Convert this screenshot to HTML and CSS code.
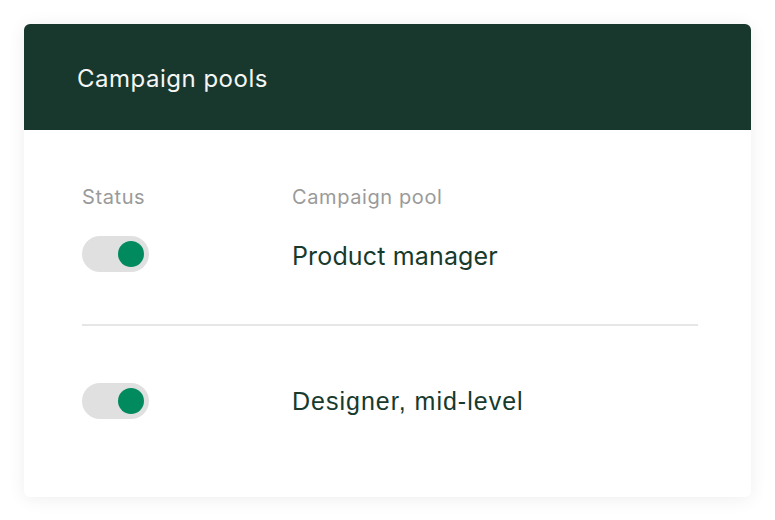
FILE: index.html
```html
<!DOCTYPE html>
<html lang="en">
<head>
    <meta charset="UTF-8">
    <meta name="viewport" content="width=device-width, initial-scale=1.0">
    <title>Campaign pools</title>
    <link rel="stylesheet" href="styles.css">
</head>
<body>
    <div class="card">
        <div class="card-header">Campaign pools</div>
        <div class="card-body">
            <div class="row labels">
                <span>Status</span>
                <span>Campaign pool</span>
            </div>
            <div class="row pool">
                <span class="toggle"><span class="knob"></span></span>
                <span class="name">Product manager</span>
            </div>
            <hr class="divider">
            <div class="row pool">
                <span class="toggle"><span class="knob"></span></span>
                <span class="name alt">Designer, mid-level</span>
            </div>
        </div>
    </div>
</body>
</html>
```

FILE: styles.css
```css
body {
    margin: 0;
    padding: 24px;
    background-color: #fff;
    font-family: Inter, "Liberation Sans", sans-serif;
}
.card {
    width: 727px;
    border-radius: 6px;
    overflow: hidden;
    background-color: #fff;
    box-shadow: 0 2px 18px rgba(0, 0, 0, 0.07);
}
.card-header {
    height: 106px;
    display: flex;
    align-items: center;
    padding-left: 53px;
    padding-top: 2px;
    box-sizing: border-box;
    background-color: #19382d;
    color: #f4f6f5;
    font-size: 24px;
    letter-spacing: 0.5px;
}
.card-body {
    padding: 55px 53px 78px 58px;
}
.row {
    display: grid;
    grid-template-columns: 210px 1fr;
    align-items: center;
}
.labels {
    height: 24px;
    color: #9a9a9a;
    font-size: 20px;
    letter-spacing: 0.6px;
}
.pool {
    height: 36px;
    margin-top: 27px;
    color: #173a2d;
    font-size: 25px;
    letter-spacing: 0.15px;
}
.name {
    padding-top: 3px;
}
.pool + .divider + .pool {
    margin-top: 57px;
}
.divider {
    margin: 52px 0 0;
    border: none;
    border-top: 2px solid #e6e6e6;
}
.toggle {
    width: 67px;
    height: 36px;
    border-radius: 18px;
    background-color: #e0e0e0;
    display: flex;
    align-items: center;
    justify-content: flex-end;
    padding-right: 5px;
    box-sizing: border-box;
}
.knob {
    width: 26px;
    height: 26px;
    border-radius: 50%;
    background-color: #008a5e;
}
.name.alt {
    padding-top: 1px;
    font-family: "Liberation Sans", Arial, sans-serif;
    letter-spacing: 1px;
}
```
